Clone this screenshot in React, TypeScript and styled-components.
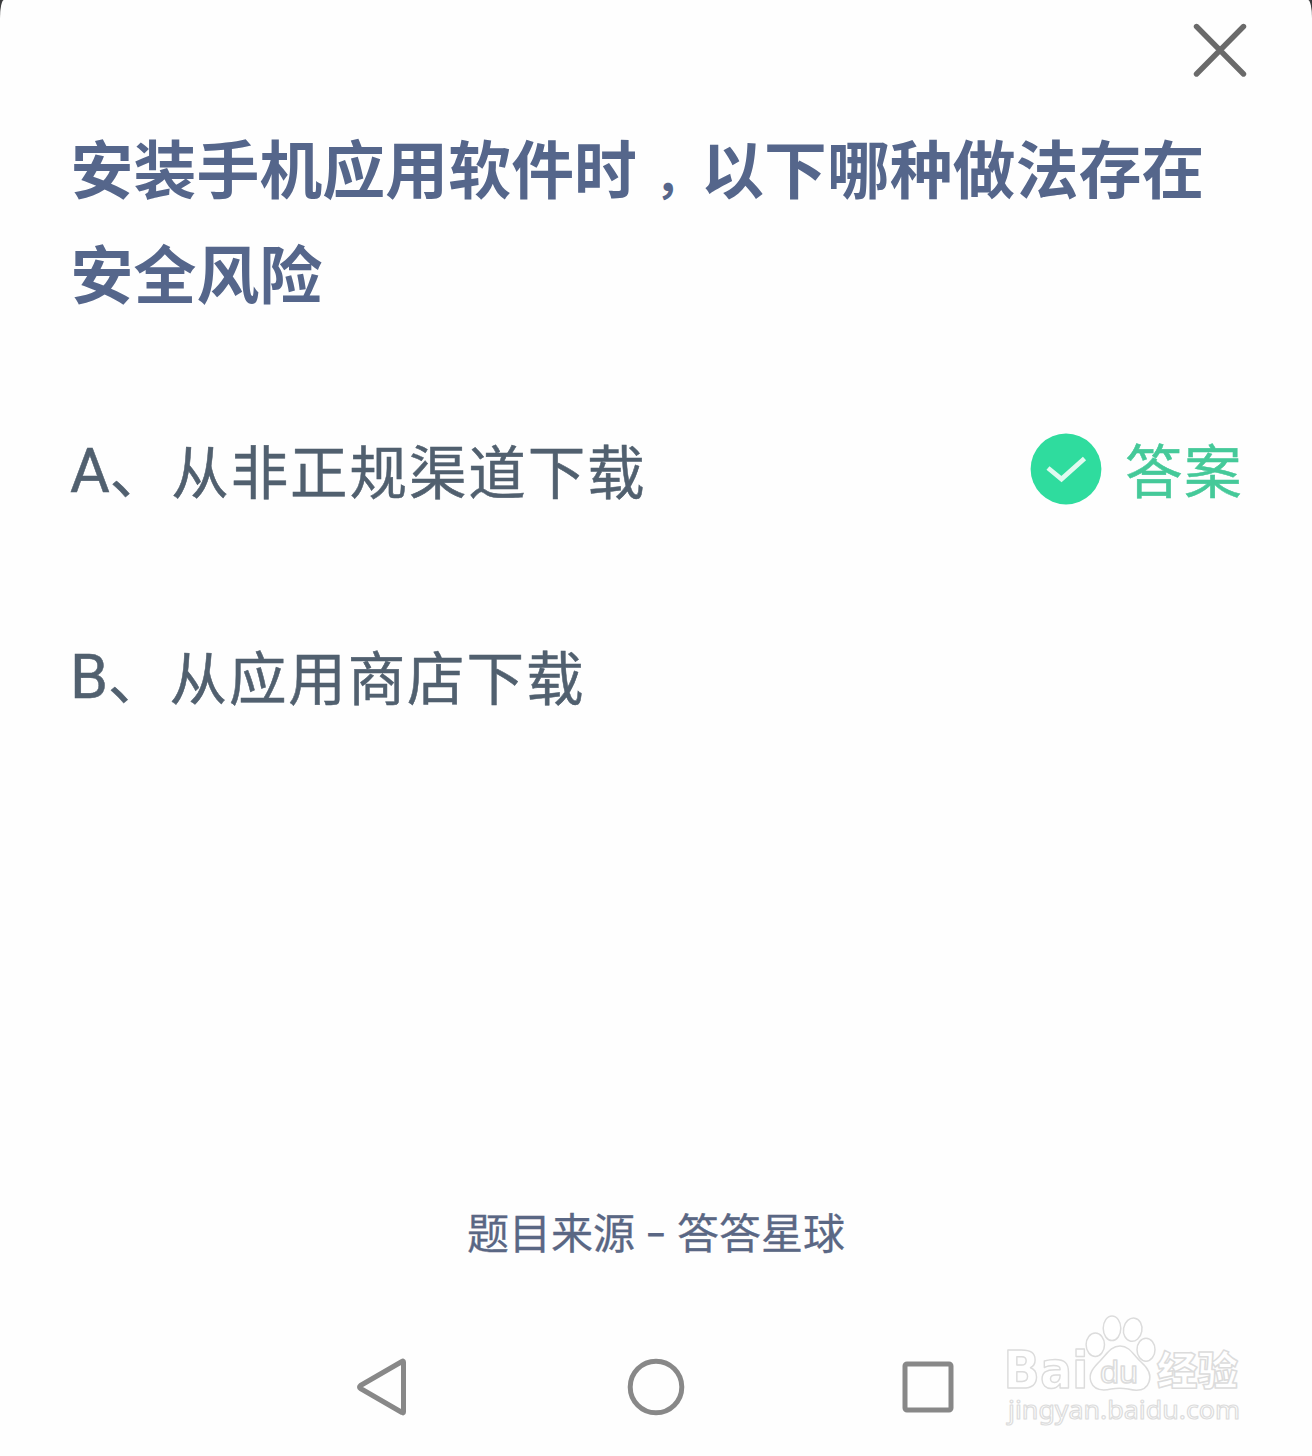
import React from 'react';
import styled, { createGlobalStyle } from 'styled-components';

const cjk = '"Noto Sans CJK SC", "Noto Sans SC", sans-serif';

const GlobalStyle = createGlobalStyle`
  * { box-sizing: border-box; }
  html { background: #3a3b3d; }
  body { margin: 0; background: #3a3b3d; overflow: hidden; }
`;

const Sheet = styled.main`
  display: flex;
  flex-direction: column;
  width: 1312px;
  height: 1456px;
  overflow: hidden;
  background: #fefefe;
  border-radius: 4px 4px 0 0 / 18px 18px 0 0;
  font-family: ${cjk};
`;

const TopBar = styled.header`
  display: flex;
  justify-content: flex-end;
  align-items: flex-end;
  height: 79px;
  padding-right: 64px;
`;

const CloseButton = styled.button`
  display: flex;
  padding: 0;
  border: 0;
  background: none;
  color: #6a6a6a;
`;

const Title = styled.h1`
  margin: 34px 0 0;
  padding: 0 60px 0 70.6px;
  font-size: 62.8px;
  line-height: 105px;
  letter-spacing: 0.14px;
  font-weight: 700;
  color: #55668b;
  white-space: nowrap;
`;

const Comma = styled.span`
  display: inline-block;
  width: 64px;
  padding-left: 18px;
  font-size: 46px;
  line-height: 1;
`;

const Options = styled.ul`
  display: flex;
  flex-direction: column;
  gap: 105px;
  margin: 95px 0 0;
  padding: 0 70px;
  list-style: none;
`;

const Option = styled.li`
  display: flex;
  align-items: center;
  justify-content: space-between;
  height: 101px;
  color: #51606f;
`;

const OptionLabel = styled.span`
  font-size: 57.5px;
  line-height: 80px;
  letter-spacing: 1.9px;
  -webkit-text-stroke: 0.5px currentColor;
  white-space: nowrap;
`;

const Letter = styled.span`
  font-family: Roboto, sans-serif;
  font-size: 61px;
  line-height: 1;
  letter-spacing: 0;
  vertical-align: 2px;
`;

const Pause = styled.span`
  letter-spacing: 4px;
`;

const Answer = styled.span`
  display: flex;
  align-items: center;
  gap: 23px;
  font-size: 57.5px;
  line-height: 80px;
  letter-spacing: 1.5px;
  -webkit-text-stroke: 0.5px currentColor;
  color: #45c999;
  margin-right: -1px;
`;

const AnswerText = styled.span`
  padding-bottom: 1px;
`;

const Source = styled.p`
  margin: auto 0 0;
  text-align: center;
  font-size: 42px;
  line-height: 60px;
  color: #5a6784;
  -webkit-text-stroke: 0.3px currentColor;
`;

const Dash = styled.span`
  display: inline-block;
  width: 23px;
  font-size: 33px;
  line-height: 1;
  font-weight: 500;
  vertical-align: 5px;
  -webkit-text-stroke: 0.9px currentColor;
`;

const NavBar = styled.nav`
  position: relative;
  display: flex;
  align-items: center;
  height: 138px;
  margin-top: 57px;
  padding-left: 356px;
  color: #888888;
`;

const NavButton = styled.button<{ $before?: number }>`
  display: flex;
  padding: 0;
  border: 0;
  margin-left: ${(p) => p.$before ?? 0}px;
  background: none;
  color: inherit;
`;

const Watermark = styled.svg`
  position: absolute;
  right: 62px;
  bottom: 21px;
`;

function CloseIcon() {
  return (
    <svg width="56" height="56" viewBox="0 0 56 56" fill="none" stroke="currentColor" strokeWidth="5.4" strokeLinecap="round">
      <path d="M4.500 3.500 51.500 51M51.500 3.500 4.500 51" />
    </svg>
  );
}

function CheckBadge() {
  return (
    <svg width="72" height="72" viewBox="0 0 72 72" fill="none">
      <circle cx="36" cy="36" r="35.4" fill="#2fdc9e" />
      <path d="M18 35 31.500 46 54.500 25.500" stroke="#e0faf0" strokeWidth="4.8" />
    </svg>
  );
}

function BaiduMark() {
  return (
    <Watermark width="250" height="125" viewBox="1000 1310 250 125" fill="#fff" stroke="#dcdcdc" strokeWidth="1.5" strokeLinejoin="round">
      <ellipse cx="1095.300" cy="1344.700" rx="9.200" ry="11.700" />
      <ellipse cx="1112" cy="1328.300" rx="8.800" ry="12.300" />
      <ellipse cx="1132.700" cy="1329.700" rx="9.200" ry="11.700" transform="rotate(10 1132.700 1329.700)" />
      <ellipse cx="1146" cy="1349.700" rx="9" ry="11.500" />
      <text x="1003.500" y="1388" fontFamily="DejaVu Sans, sans-serif" fontSize="51" fontWeight="700" textLength="85" lengthAdjust="spacingAndGlyphs">Bai</text>
      <path d="M1120 1346C1130 1346 1134 1356 1141 1362C1148 1368 1152 1374 1149 1382C1146 1391 1136 1391 1128 1389C1122 1388 1117 1388 1111 1389C1102 1391 1094 1390 1091 1382C1088 1374 1093 1368 1100 1361C1107 1354 1111 1346 1120 1346Z" />
      <text x="1100" y="1383" fontFamily="Liberation Sans, Arial, sans-serif" fontSize="32" textLength="38" lengthAdjust="spacingAndGlyphs">du</text>
      <text x="1157" y="1385" fontFamily="Noto Sans CJK SC, sans-serif" fontSize="40" fontWeight="900" textLength="81" lengthAdjust="spacingAndGlyphs">经验</text>
      <text x="1008" y="1419" fontFamily="Noto Sans, sans-serif" fontSize="26" strokeWidth="1.200" textLength="232" lengthAdjust="spacingAndGlyphs">jingyan.baidu.com</text>
    </Watermark>
  );
}

export default function App() {
  return (
    <>
      <GlobalStyle />
      <Sheet>
        <TopBar>
          <CloseButton aria-label="关闭"><CloseIcon /></CloseButton>
        </TopBar>
        <Title>
          安装手机应用软件时<Comma>，</Comma>以下哪种做法存在<br />安全风险
        </Title>
        <Options>
          <Option>
            <OptionLabel><Letter>A</Letter><Pause>、</Pause>从非正规渠道下载</OptionLabel>
            <Answer><CheckBadge /><AnswerText>答案</AnswerText></Answer>
          </Option>
          <Option>
            <OptionLabel><Letter>B</Letter><Pause>、</Pause>从应用商店下载</OptionLabel>
          </Option>
        </Options>
        <Source>题目来源 <Dash>–</Dash> 答答星球</Source>
        <NavBar>
          <NavButton aria-label="返回">
            <svg width="52" height="60" viewBox="0 0 52 60" fill="none" stroke="currentColor" strokeWidth="5" strokeLinejoin="round">
              <path d="M47.500 5V55Q47.500 56.500 46 55.500L4.500 31.500Q2.500 30 4.500 28.500L46 4.500Q47.500 3.500 47.500 5Z" />
            </svg>
          </NavButton>
          <NavButton $before={219} aria-label="主页">
            <svg width="58" height="58" viewBox="0 0 58 58" fill="none" stroke="currentColor" strokeWidth="5">
              <circle cx="29" cy="29" r="25.800" />
            </svg>
          </NavButton>
          <NavButton $before={216} aria-label="最近任务">
            <svg width="54" height="54" viewBox="0 0 54 54" fill="none" stroke="currentColor" strokeWidth="5">
              <rect x="4" y="4" width="46" height="46" rx="2" />
            </svg>
          </NavButton>
          <BaiduMark />
        </NavBar>
      </Sheet>
    </>
  );
}
